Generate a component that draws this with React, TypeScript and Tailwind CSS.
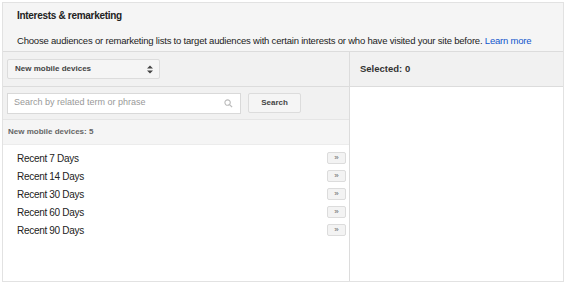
import React from "react";

export default function App() {
  const items = ["Recent 7 Days", "Recent 14 Days", "Recent 30 Days", "Recent 60 Days", "Recent 90 Days"];
  return (
    <div className="w-[567px] h-[285px] bg-white pt-[2px] pl-[2px]" style={{ fontFamily: '"Liberation Sans", Arial, sans-serif' }}>
      <div className="w-[562px] h-[280px] border border-[#e2e2e2] flex flex-col">
        <div className="h-[49px] bg-[#f5f5f5] border-b border-[#dcdcdc] px-[14px] pt-[6px]">
          <div className="text-[10px] font-bold text-[#222] leading-[14px] tracking-[-0.3px]">Interests &amp; remarketing</div>
          <div className="text-[9.5px] text-[#222] leading-[14px] mt-[11px] tracking-[-0.2px] whitespace-nowrap">
            Choose audiences or remarketing lists to target audiences with certain interests or who have visited your site before.{" "}
            <span className="text-[#1155cc]">Learn more</span>
          </div>
        </div>
        <div className="flex flex-1">
          <div className="w-[347px] border-r border-[#dcdcdc] flex flex-col">
            <div className="h-[35px] bg-[#f1f1f1] border-b border-[#dcdcdc] flex items-center pl-[4px]">
              <div className="w-[153px] h-[20px] bg-[#f5f5f5] border border-[#dcdcdc] rounded-[2px] flex items-center justify-between pl-[7px] pr-[6px]">
                <span className="text-[8px] font-bold text-[#444]">New mobile devices</span>
                <svg width="6" height="9" viewBox="0 0 6 9"><path d="M0 3.5L3 0.5L6 3.5Z M0 5.5L3 8.5L6 5.5Z" fill="#444" /></svg>
              </div>
            </div>
            <div className="h-[33px] bg-[#f1f1f1] border-b border-[#e5e5e5] flex items-center pl-[4px]">
              <div className="w-[234px] h-[21px] bg-white border border-[#d9d9d9] flex items-center justify-between pl-[6px] pr-[7px]">
                <span className="text-[9px] text-[#999]">Search by related term or phrase</span>
                <svg width="9" height="9" viewBox="0 0 10 10"><circle cx="4" cy="4" r="3" fill="none" stroke="#bbb" strokeWidth="1.2" /><path d="M6.2 6.2L9 9" stroke="#bbb" strokeWidth="1.4" /></svg>
              </div>
              <div className="ml-[7px] w-[53px] h-[20px] bg-[#f5f5f5] border border-[#dcdcdc] rounded-[2px] flex items-center justify-center">
                <span className="text-[8px] font-bold text-[#444]">Search</span>
              </div>
            </div>
            <div className="h-[25px] bg-[#f5f5f5] border-b border-[#ececec] flex items-center pl-[5px]">
              <span className="text-[8px] font-bold text-[#666]">New mobile devices: 5</span>
            </div>
            <div className="flex flex-col pt-[4px]">
              {items.map((t) => (
                <div key={t} className="h-[18px] flex items-center justify-between pl-[14px] pr-[3px]">
                  <span className="text-[10px] text-[#222] tracking-[-0.3px]">{t}</span>
                  <div className="w-[19px] h-[12px] bg-[#f3f3f3] border border-[#dcdcdc] rounded-[2px] flex items-center justify-center">
                    <span className="text-[8px] text-[#666] leading-none">»</span>
                  </div>
                </div>
              ))}
            </div>
          </div>
          <div className="flex-1 flex flex-col">
            <div className="h-[35px] bg-[#f1f1f1] border-b border-[#dcdcdc] flex items-center pl-[10px]">
              <span className="text-[9.5px] font-bold text-[#333]">Selected: 0</span>
            </div>
          </div>
        </div>
      </div>
    </div>
  );
}
